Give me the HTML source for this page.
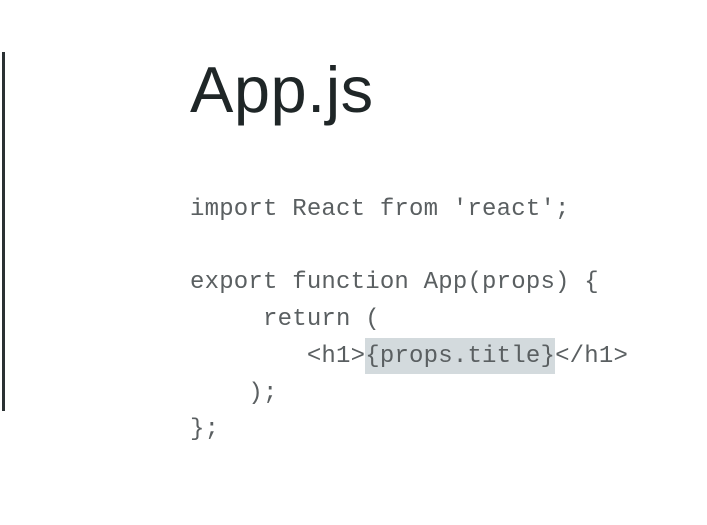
<!DOCTYPE html>
<html><head><style>
html,body{margin:0;padding:0;background:#fff;width:707px;height:525px;overflow:hidden;position:relative}
.bar{position:absolute;left:2px;top:52px;width:3px;height:359px;background:#2a3133}
h1{position:absolute;left:190px;top:57px;margin:0;font:400 65px/1 "Liberation Sans",sans-serif;color:#1f2627;letter-spacing:0.5px}
pre{position:absolute;left:190px;top:192px;margin:0;font:400 24px/36.7px "Liberation Mono",monospace;color:#5a5f61;letter-spacing:0.2px}
.hl{background:#d3dadd;padding:5px 0 4px}
</style></head><body>
<div class="bar"></div>
<h1>App.js</h1>
<pre>import React from 'react';

export function App(props) {
     return (
        &lt;h1&gt;<span class="hl">{props.title}</span>&lt;/h1&gt;
    );
};</pre>
</body></html>
